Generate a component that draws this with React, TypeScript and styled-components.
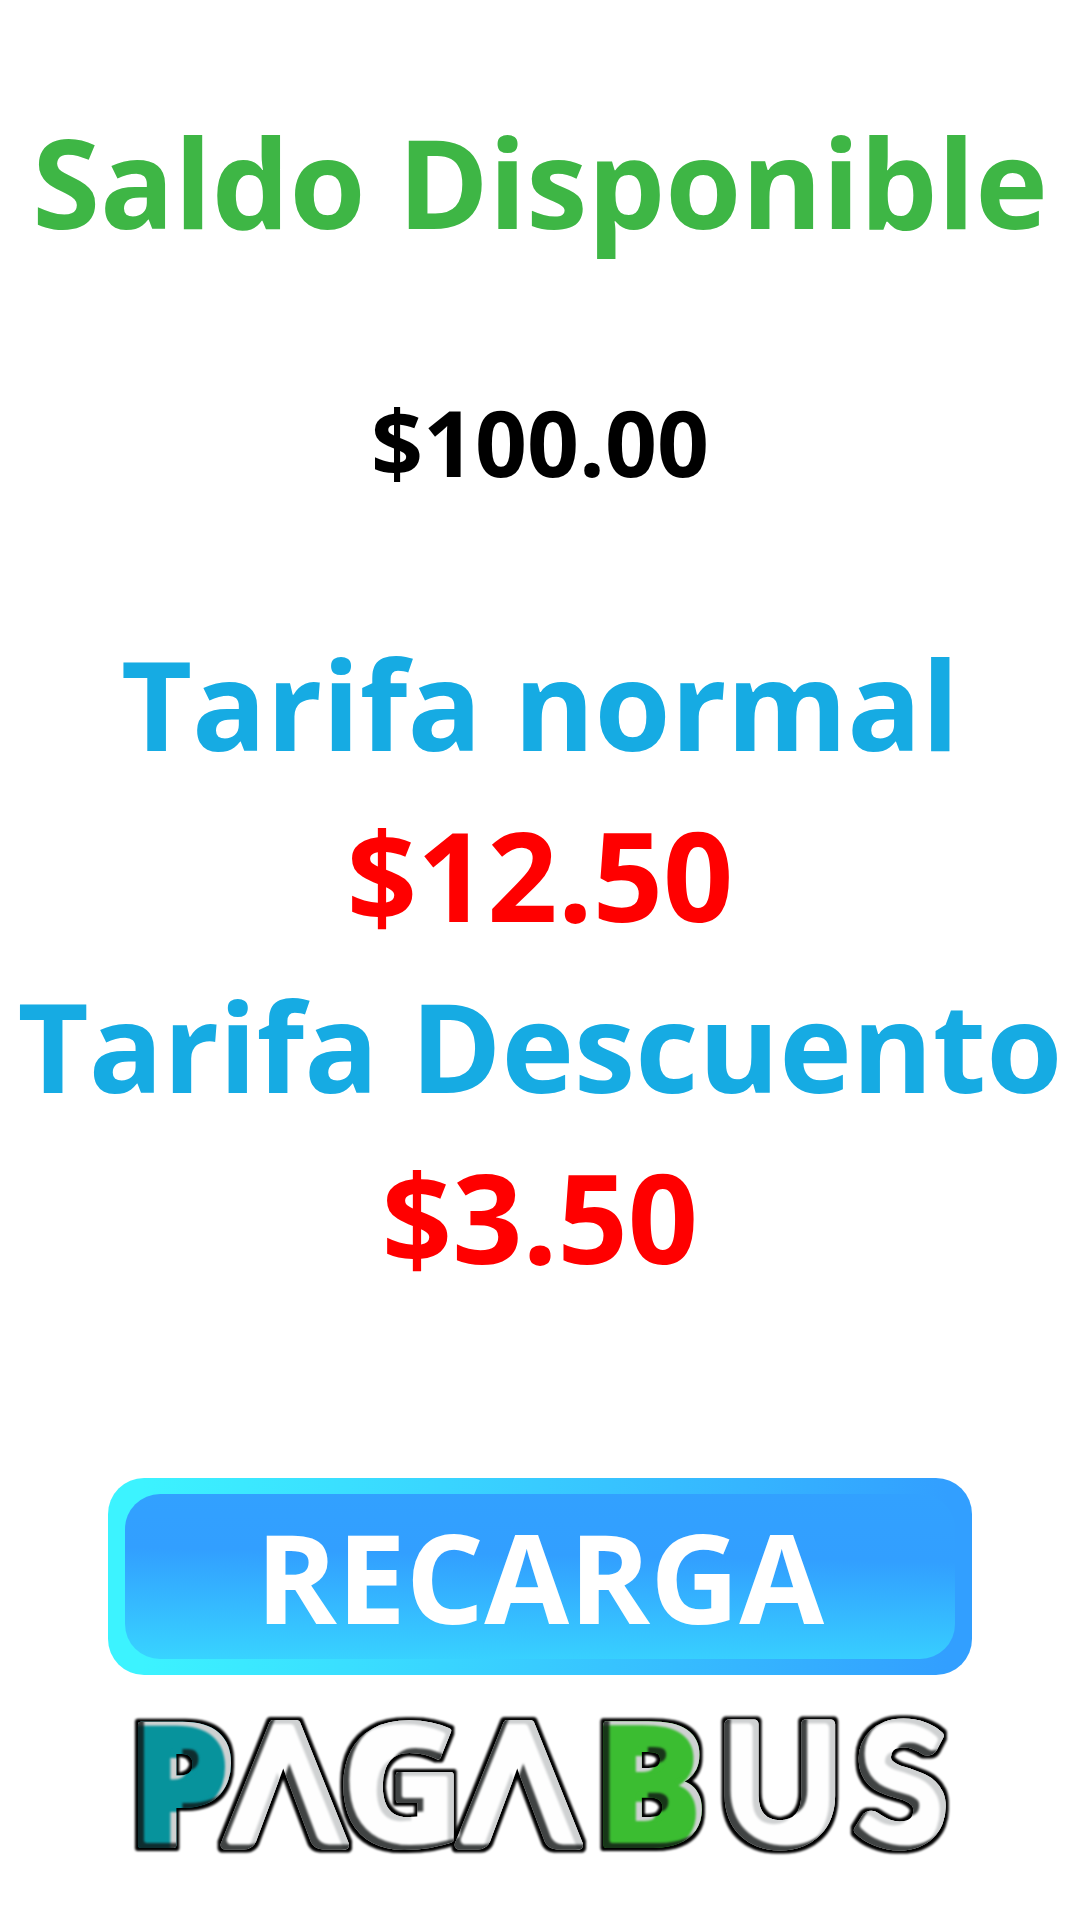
import React from 'react';
import styled, { createGlobalStyle } from 'styled-components';

const GlobalStyle = createGlobalStyle`
  *, *::before, *::after { box-sizing: border-box; }
  body {
    margin: 0;
    background: #ffffff;
    font-family: "Open Sans", "Noto Sans", sans-serif;
    font-weight: 700;
  }
`;

const Page = styled.main`
  display: flex;
  flex-direction: column;
  align-items: center;
  padding-top: 96px;
  font-size: 123px;
  line-height: 171px;
  text-align: center;

  @media (max-width: 1040px) {
    font-size: 64px;
    line-height: 88px;
  }
`;

const Balance = styled.section`
  display: flex;
  flex-direction: column;
  gap: 90px;
  margin-bottom: 90px;
`;

const Title = styled.h1`
  margin: 0;
  font-size: inherit;
  color: #3eb645;
`;

const BalanceAmount = styled.p`
  margin: 0;
  font-size: 91px;
  color: #000000;
`;

const Fares = styled.dl`
  margin: 0 0 176px;
`;

const FareName = styled.dt`
  color: #16abe3;
`;

const FarePrice = styled.dd`
  margin: 0;
  color: #ff0000;
`;

const RechargeButton = styled.button`
  position: relative;
  isolation: isolate;
  width: 80%;
  padding: 13px 16px;
  border: 0;
  border-radius: 36px;
  background: linear-gradient(90deg, #3cf3ff 4%, #38cbff 50%, #329fff 97%);
  color: #ffffff;
  font: inherit;
  cursor: pointer;

  &::before {
    content: "";
    position: absolute;
    z-index: -1;
    inset: 16px 17px;
    border-radius: 35px;
    background: linear-gradient(181deg, #32a1ff 0%, #329fff 38%, #38d4ff 100%);
  }
`;

const Logo = styled.svg`
  display: block;
  width: 100%;
  max-width: 840px;
  margin-top: 25px;
  overflow: visible;
  text-anchor: middle;
  stroke-linejoin: round;
`;

const RoundLetter = styled.text`
  font-family: Lato, sans-serif;
  font-size: 166px;
  font-weight: 900;
  stroke-width: 9px;
`;

const BlockLetter = styled.text`
  font-family: "Open Sans", sans-serif;
  font-size: 168px;
  font-weight: 800;
  stroke-width: 6px;
`;

const letters = [
  { char: 'P', x: 61, color: '#07939c', Letter: BlockLetter },
  { char: 'Λ', x: 165, color: '#fefefe', Letter: RoundLetter },
  { char: 'G', x: 280, color: '#fefefe', Letter: BlockLetter },
  { char: 'Λ', x: 399, color: '#fefefe', Letter: RoundLetter },
  { char: 'B', x: 530, color: '#3bbd31', Letter: BlockLetter },
  { char: 'U', x: 660, color: '#fefefe', Letter: RoundLetter },
  { char: 'S', x: 781, color: '#fefefe', Letter: RoundLetter },
];

function PagabusLogo() {
  return (
    <Logo viewBox="0 0 840 170" role="img" aria-label="PAGABUS">
      <defs>
        <filter id="bevel" x="-10%" y="-10%" width="120%" height="120%" colorInterpolationFilters="sRGB">
          <feMorphology in="SourceAlpha" operator="dilate" radius="3" result="grown" />
          <feGaussianBlur in="grown" stdDeviation="0.8" result="outline" />
          <feOffset in="SourceAlpha" dx="-6" dy="4" result="lightShift" />
          <feGaussianBlur in="lightShift" stdDeviation="1.2" result="lightSoft" />
          <feFlood floodColor="#cfd1d2" />
          <feComposite in2="SourceAlpha" operator="in" />
          <feComposite in2="lightSoft" operator="out" result="light" />
          <feOffset in="SourceAlpha" dx="6" dy="-5" result="darkShift" />
          <feGaussianBlur in="darkShift" stdDeviation="0.8" result="darkSoft" />
          <feFlood floodColor="#101414" floodOpacity="0.8" />
          <feComposite in2="SourceAlpha" operator="in" />
          <feComposite in2="darkSoft" operator="out" result="dark" />
          <feMerge>
            <feMergeNode in="outline" />
            <feMergeNode in="SourceGraphic" />
            <feMergeNode in="light" />
            <feMergeNode in="dark" />
          </feMerge>
        </filter>
      </defs>
      <g filter="url(#bevel)">
        {letters.map(({ char, x, color, Letter }) => (
          <Letter key={x} x={x} y={145} fill={color} stroke={color}>{char}</Letter>
        ))}
      </g>
    </Logo>
  );
}

export default function App() {
  return (
    <>
      <GlobalStyle />
      <Page>
        <Balance>
          <Title>Saldo Disponible</Title>
          <BalanceAmount>$100.00</BalanceAmount>
        </Balance>
        <Fares>
          <FareName>Tarifa normal</FareName>
          <FarePrice>$12.50</FarePrice>
          <FareName>Tarifa Descuento</FareName>
          <FarePrice>$3.50</FarePrice>
        </Fares>
        <RechargeButton type="button">RECARGA</RechargeButton>
        <PagabusLogo />
      </Page>
    </>
  );
}
